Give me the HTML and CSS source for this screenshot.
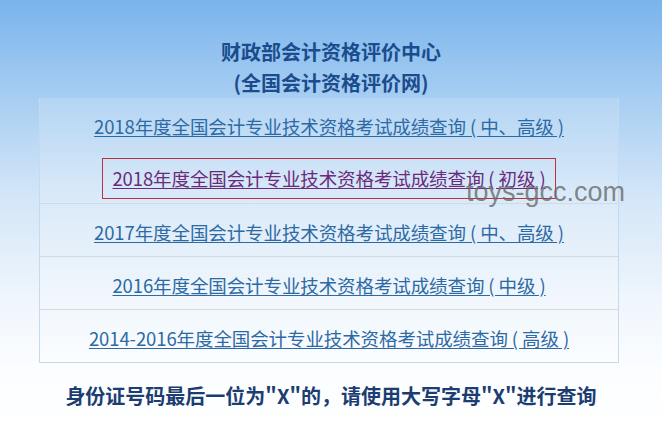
FILE: index.html
```html
<!DOCTYPE html>
<html lang="zh-CN">
<head>
<meta charset="utf-8">
<title>财政部会计资格评价中心</title>
<link rel="stylesheet" href="styles.css">
</head>
<body>
<div class="page">
  <div class="title">
    <div class="title-line">财政部会计资格评价中心</div>
    <div class="title-line">(全国会计资格评价网)</div>
  </div>
  <div class="table">
    <div class="row"><a class="link" href="#a">2018年度全国会计专业技术资格考试成绩查询 ( 中、高级 )</a></div>
    <div class="row row-focus"><span class="focus"><a class="link visited" href="#b">2018年度全国会计专业技术资格考试成绩查询 ( 初级 )</a></span></div>
    <div class="row"><a class="link" href="#c">2017年度全国会计专业技术资格考试成绩查询 ( 中、高级 )</a></div>
    <div class="row"><a class="link" href="#d">2016年度全国会计专业技术资格考试成绩查询 ( 中级 )</a></div>
    <div class="row"><a class="link" href="#e">2014-2016年度全国会计专业技术资格考试成绩查询 ( 高级 )</a></div>
  </div>
  <div class="note">身份证号码最后一位为"X"的，请使用大写字母"X"进行查询</div>
  <div class="watermark">toys-gcc.com</div>
</div>
</body>
</html>
```
FILE: styles.css
```css
html, body {
  margin: 0;
  padding: 0;
}
body {
  width: 662px;
  height: 433px;
  overflow: hidden;
  background: linear-gradient(180deg, #79b4ec 0%, #a6cdf2 22%, #d3e6f8 45%, #eef5fc 68%, #fbfdff 85%, #ffffff 100%);
  font-family: "Noto Sans CJK SC", "Noto Sans", sans-serif;
}
.page {
  position: relative;
  width: 662px;
  height: 433px;
}
.title {
  padding-top: 36px;
  text-align: center;
  color: #1b4c8c;
  font-weight: bold;
  font-size: 20px;
  line-height: 31px;
}
.table {
  margin: 0 43px 0 39px;
  border-left: 1px solid #c4dbee;
  border-right: 1px solid #c4dbee;
  border-bottom: 1px solid #c4dbee;
  background: rgba(255, 255, 255, 0.15);
}
.row {
  height: 49px;
  padding-top: 3px;
  display: flex;
  align-items: center;
  justify-content: center;
  border-bottom: 1px solid #cfdce6;
}
.row:first-child {
  height: 47px;
  padding-top: 4px;
}
.row.row-focus {
  height: 50px;
}
.row:last-child {
  border-bottom: none;
}
.link {
  color: #2c6aa5;
  font-size: 18.5px;
  line-height: 24px;
  text-decoration: underline;
  text-underline-offset: 2px;
  letter-spacing: -0.1px;
}
.link.visited {
  color: #6b2b7b;
}
.focus {
  display: flex;
  align-items: center;
  height: 39px;
  padding: 0 9px;
  border: 1px solid #b5343f;
}
.note {
  margin-top: 18px;
  text-align: center;
  color: #1c3d72;
  font-weight: bold;
  font-size: 20px;
  line-height: 30px;
}
.watermark {
  position: absolute;
  left: 466px;
  top: 176px;
  font-family: "Liberation Sans Narrow", "Liberation Sans", sans-serif;
  font-size: 27px;
  line-height: 32px;
  color: rgba(105, 105, 105, 0.8);
}
```
